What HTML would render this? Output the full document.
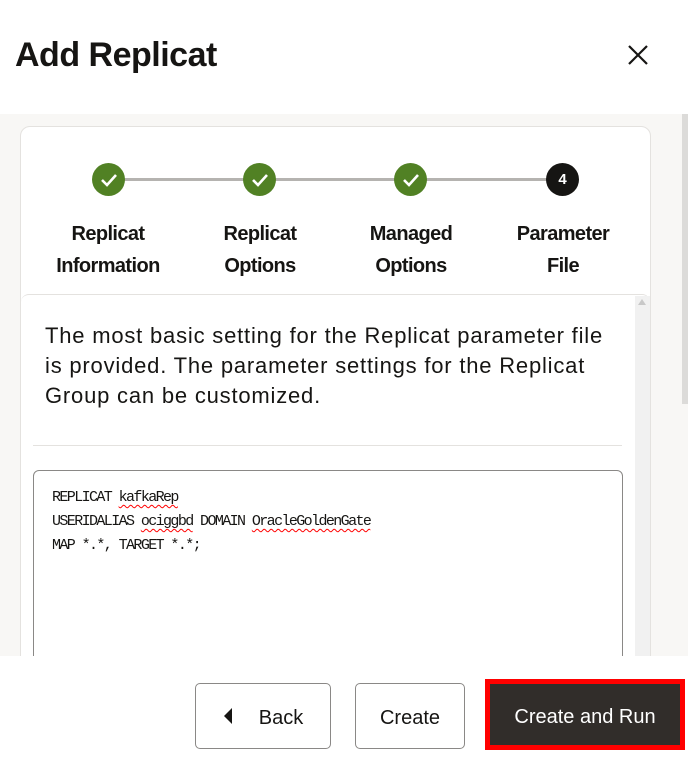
<!DOCTYPE html>
<html><head><meta charset="utf-8"><style>
*{margin:0;padding:0;box-sizing:border-box}
body{width:688px;height:762px;overflow:hidden;background:#fff;font-family:"Liberation Sans",sans-serif;color:#161513;position:relative}
.abs{position:absolute}
h1{position:absolute;left:15px;top:36px;font-size:34px;font-weight:bold;letter-spacing:-0.5px}
.gray{left:0;top:114px;width:688px;height:542px;background:#f8f7f5}
.card{left:20px;top:126px;width:631px;height:560px;background:#fff;border:1px solid #e4e2df;border-radius:10px}
.line{top:178px;height:3px;background:#b5b3b0}
.dot{width:33px;height:33px;border-radius:50%;top:163px;background:#518124;display:flex;align-items:center;justify-content:center}
.lbl{top:218px;width:150px;text-align:center;font-weight:bold;font-size:20px;line-height:32px;letter-spacing:-0.6px}
.panel{left:21px;top:294px;width:629px;height:380px;background:#fff;border-top:1px solid #e4e2df;border-radius:8px 8px 0 0}
.sb{left:635px;top:296px;width:15px;height:360px;background:#f1f1f1}
.desc{left:45px;top:321px;width:585px;font-size:22px;letter-spacing:0.8px;line-height:30px;color:#161513;white-space:nowrap}
.sep{left:33px;top:445px;width:589px;height:1px;background:#e4e2df}
.ta{left:33px;top:470px;width:590px;height:220px;border:1px solid #8a8886;border-radius:6px}
.code{left:52px;top:486px;font-family:"Liberation Mono",monospace;font-size:15px;line-height:24px;letter-spacing:-1.6px;white-space:pre}
.sq{text-decoration:underline wavy red;text-decoration-thickness:1px;text-underline-offset:3px}
.foot{left:0;top:656px;width:688px;height:106px;background:#fff}
.btn{top:683px;height:66px;border:1px solid #8a8886;border-radius:5px;background:#fff;font-size:20px;display:flex;align-items:center;justify-content:center;padding-top:4px}
</style></head><body>
<h1>Add Replicat</h1>
<svg class="abs" style="left:627px;top:44px" width="22" height="22" viewBox="0 0 22 22"><path d="M2 2L20 20M20 2L2 20" stroke="#161513" stroke-width="2.2"/></svg>
<div class="abs gray"></div>
<div class="abs" style="left:682px;top:114px;width:6px;height:290px;background:#dcdbd9"></div>
<div class="abs card"></div>
<div class="abs line" style="left:110px;width:450px"></div>
<div class="abs dot" style="left:92px"><svg width="18" height="14" viewBox="0 0 18 14"><path d="M2 7l5 5L16 2" stroke="#fff" stroke-width="2.6" fill="none"/></svg></div>
<div class="abs dot" style="left:243px"><svg width="18" height="14" viewBox="0 0 18 14"><path d="M2 7l5 5L16 2" stroke="#fff" stroke-width="2.6" fill="none"/></svg></div>
<div class="abs dot" style="left:394px"><svg width="18" height="14" viewBox="0 0 18 14"><path d="M2 7l5 5L16 2" stroke="#fff" stroke-width="2.6" fill="none"/></svg></div>
<div class="abs dot" style="left:546px;background:#161513;color:#fff;font-weight:bold;font-size:15px">4</div>
<div class="abs lbl" style="left:33px">Replicat<br>Information</div>
<div class="abs lbl" style="left:185px">Replicat<br>Options</div>
<div class="abs lbl" style="left:336px">Managed<br>Options</div>
<div class="abs lbl" style="left:488px">Parameter<br>File</div>
<div class="abs panel"></div>
<div class="abs sb"></div>
<svg class="abs" style="left:637px;top:298px" width="10" height="8"><path d="M1 7L5 1L9 7Z" fill="#c8c8c8"/></svg>
<div class="abs desc">The most basic setting for the Replicat parameter file<br>is provided. The parameter settings for the Replicat<br>Group can be customized.</div>
<div class="abs sep"></div>
<div class="abs ta"></div>
<div class="abs code">REPLICAT <span class="sq">kafkaRep</span>
USERIDALIAS <span class="sq">ociggbd</span> DOMAIN <span class="sq">OracleGoldenGate</span>
MAP *.*, TARGET *.*;</div>
<div class="abs foot"></div>
<div class="abs btn" style="left:195px;width:136px"><svg width="10" height="16" style="margin-right:26px;margin-top:-4px"><path d="M9 0L1 8L9 16Z" fill="#161513"/></svg>Back</div>
<div class="abs btn" style="left:355px;width:110px">Create</div>
<div class="abs" style="left:485px;top:679px;width:200px;height:71px;border:5px solid #f00;background:#312d2a;color:#fff;font-size:20px;display:flex;align-items:center;justify-content:center;padding-top:6px">Create and Run</div>
</body></html>
